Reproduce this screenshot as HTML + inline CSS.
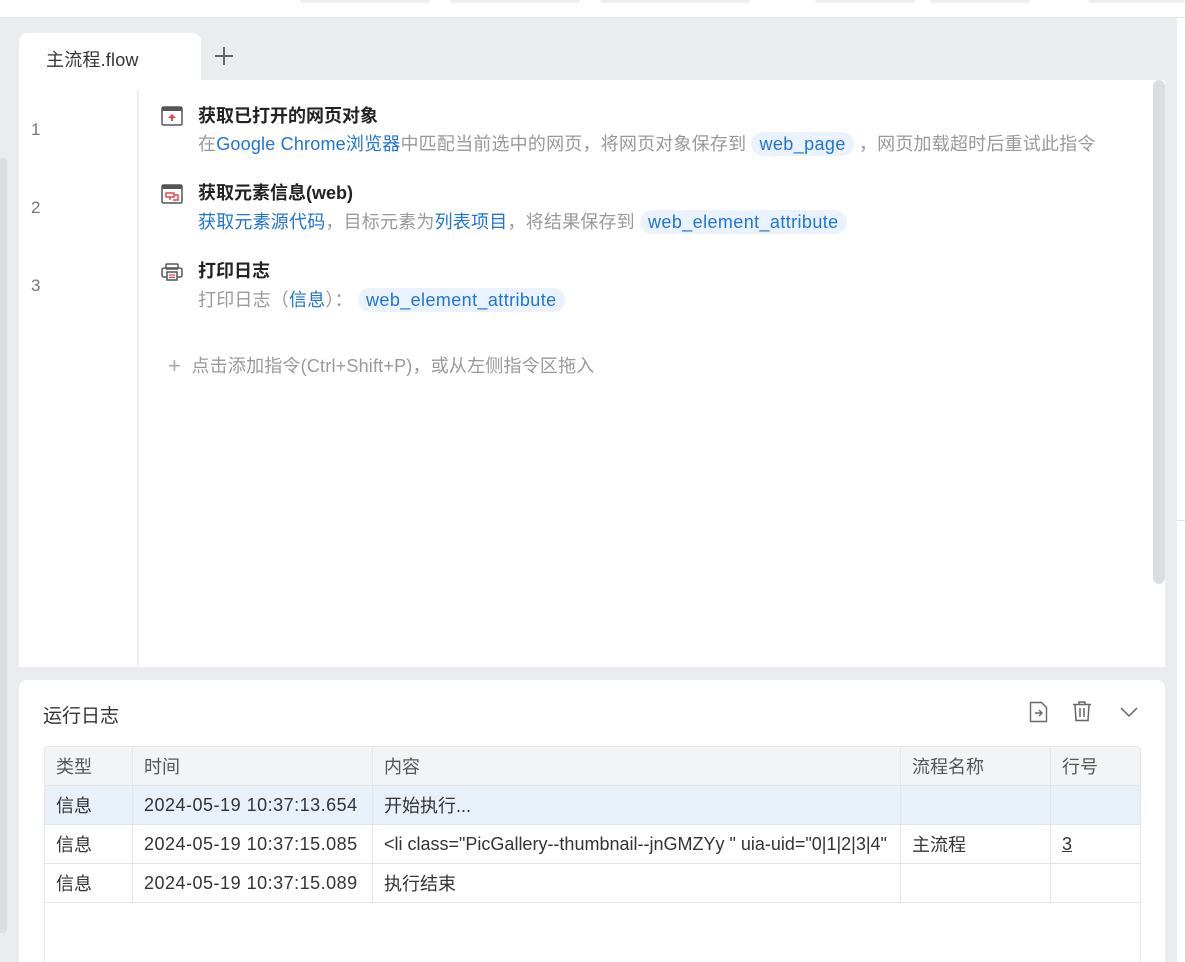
<!DOCTYPE html>
<html style="width:1185px;height:962px;overflow:hidden"><head><meta charset="utf-8"><style>
*{margin:0;padding:0;box-sizing:border-box}
body{width:1185px;height:962px;overflow:hidden;background:#ebecf0;font-family:"Liberation Sans","Noto Sans CJK SC",sans-serif;position:relative;color:#333}
.a{position:absolute}
.top{left:0;top:0;width:1185px;height:18px;background:#fff;border-bottom:1px solid #e2e3e7}
.ft{top:0;height:3px;background:#eee;border-radius:0 0 4px 4px}
.t{font-size:18px;white-space:nowrap;letter-spacing:0.2px}
.title{font-weight:bold;color:#222;font-size:18px;letter-spacing:0}
.desc{color:#999}
.lk{color:#1f74d6}
.chip{background:#eaf3fd;color:#1f74d6;border-radius:12px;padding:2px 8px;letter-spacing:0.4px}
.num{color:#777;font-size:17px}
table{border-collapse:collapse;font-size:18px;color:#333}
td{border:1px solid #e3e5e8;height:39px;padding:0 11px;white-space:nowrap;overflow:hidden;vertical-align:middle}
tr.h td{background:#f3f4f6;color:#555}
tr.s td{background:#e8f0fa}
.ts{letter-spacing:0.5px}
</style></head><body>
<div class="a top"></div>
<div class="a ft" style="left:300px;width:130px"></div>
<div class="a ft" style="left:450px;width:130px"></div>
<div class="a ft" style="left:600px;width:150px"></div>
<div class="a ft" style="left:815px;width:100px"></div>
<div class="a ft" style="left:930px;width:100px"></div>
<div class="a ft" style="left:1088px;width:97px"></div>
<div class="a" style="left:1177px;top:18px;width:8px;height:944px;background:#fff"></div>
<div class="a" style="left:1177px;top:520px;width:8px;height:1px;background:#e2e3e7"></div>
<div class="a" style="left:0;top:158px;width:7px;height:775px;background:#dcdde1;border-radius:0 4px 4px 0"></div>

<div class="a" style="left:19px;top:33px;width:182px;height:50px;background:#fff;border-radius:8px 8px 0 0"></div>
<div class="a t" style="left:46px;top:46px;color:#333">主流程.flow</div>
<div class="a" style="left:214px;top:46px;width:20px;height:20px">
<svg width="20" height="20"><path d="M10 1v18M1 10h18" stroke="#666" stroke-width="2"/></svg></div>

<div class="a" style="left:19px;top:80px;width:1146px;height:587px;background:#fff"></div>
<div class="a" style="left:137px;top:90px;width:2px;height:577px;background:#eeeff1"></div>
<div class="a" style="left:1153px;top:80px;width:12px;height:504px;background:#dcdde1;border-radius:6px"></div>
<div class="a num" style="left:31px;top:120px">1</div>
<div class="a num" style="left:31px;top:198px">2</div>
<div class="a num" style="left:31px;top:276px">3</div>

<svg class="a" style="left:161px;top:106px" width="22" height="20"><rect x="1" y="1" width="20" height="18" rx="1.5" fill="#fff" stroke="#555" stroke-width="1.5"/><rect x="1" y="1" width="20" height="4" fill="#555"/><path d="M11 8l-4 4h3v3h2v-3h3z" fill="#e8474b"/></svg>
<svg class="a" style="left:161px;top:184px" width="22" height="20"><rect x="1" y="1" width="20" height="18" rx="1.5" fill="#fff" stroke="#555" stroke-width="1.5"/><rect x="1" y="1" width="20" height="4" fill="#555"/><path d="M5 9h8v4H5zM9 13v3M13 11h4v5h-5" stroke="#e8474b" stroke-width="1.5" fill="none"/></svg>
<svg class="a" style="left:161px;top:262px" width="22" height="20"><rect x="5" y="2" width="12" height="5" rx="1" fill="none" stroke="#555" stroke-width="1.5"/><rect x="1" y="6" width="20" height="9" rx="2" fill="none" stroke="#555" stroke-width="1.5"/><rect x="6" y="10" width="10" height="8" fill="#fff" stroke="#555" stroke-width="1.5"/><path d="M8 13h6M8 15.5h6" stroke="#e8474b" stroke-width="1.2"/></svg>

<div class="a t title" style="left:198px;top:102px">获取已打开的网页对象</div>
<div class="a t desc" style="left:198px;top:130px">在<span class="lk">Google Chrome浏览器</span>中匹配当前选中的网页，将网页对象保存到 <span class="chip">web_page</span> ，网页加载超时后重试此指令</div>
<div class="a t title" style="left:198px;top:179px">获取元素信息(web)</div>
<div class="a t desc" style="left:198px;top:208px"><span class="lk">获取元素源代码</span>，目标元素为<span class="lk">列表项目</span>，将结果保存到 <span class="chip">web_element_attribute</span></div>
<div class="a t title" style="left:198px;top:257px">打印日志</div>
<div class="a t desc" style="left:198px;top:286px">打印日志（<span class="lk">信息</span>）： <span class="chip">web_element_attribute</span></div>
<div class="a t desc" style="left:168px;top:352px"><span style="font-size:22px;color:#aaa;position:relative;top:1px">+</span>&nbsp; 点击添加指令(Ctrl+Shift+P)，或从左侧指令区拖入</div>

<div class="a" style="left:19px;top:680px;width:1146px;height:282px;background:#fff;border-radius:8px 8px 0 0"></div>
<div class="a" style="left:43px;top:701px;font-size:19px;color:#333">运行日志</div>
<svg class="a" style="left:1029px;top:701px" width="20" height="22"><path d="M1.5 1.5h11l5 5v14h-16z" fill="none" stroke="#666" stroke-width="1.4"/><path d="M6 12h7M10 9l3 3-3 3" fill="none" stroke="#666" stroke-width="1.4"/></svg>
<svg class="a" style="left:1072px;top:701px" width="20" height="21"><path d="M1 3.5h18M7 3.5V1h6v2.5M3 3.5l1 16h12l1-16M8 7v9M12 7v9" fill="none" stroke="#666" stroke-width="1.5"/></svg>
<svg class="a" style="left:1119px;top:705px" width="20" height="14"><path d="M2 3l8 8 8-8" fill="none" stroke="#666" stroke-width="1.5"/></svg>

<div class="a" style="left:44px;top:746px;width:1097px;height:216px;border:1px solid #e3e5e8;border-bottom:none;border-radius:4px 4px 0 0;overflow:hidden">
<table style="width:1097px;table-layout:fixed;margin:-1px 0 0 -1px">
<colgroup><col style="width:88px"><col style="width:240px"><col style="width:528px"><col style="width:150px"><col style="width:91px"></colgroup>
<tr class="h"><td>类型</td><td>时间</td><td>内容</td><td>流程名称</td><td>行号</td></tr>
<tr class="s"><td>信息</td><td class="ts">2024-05-19 10:37:13.654</td><td>开始执行...</td><td></td><td></td></tr>
<tr><td>信息</td><td class="ts">2024-05-19 10:37:15.085</td><td style="text-overflow:ellipsis">&lt;li class="PicGallery--thumbnail--jnGMZYy " uia-uid="0|1|2|3|4"</td><td>主流程</td><td><u>3</u></td></tr>
<tr><td>信息</td><td class="ts">2024-05-19 10:37:15.089</td><td>执行结束</td><td></td><td></td></tr>
</table></div>
</body></html>
